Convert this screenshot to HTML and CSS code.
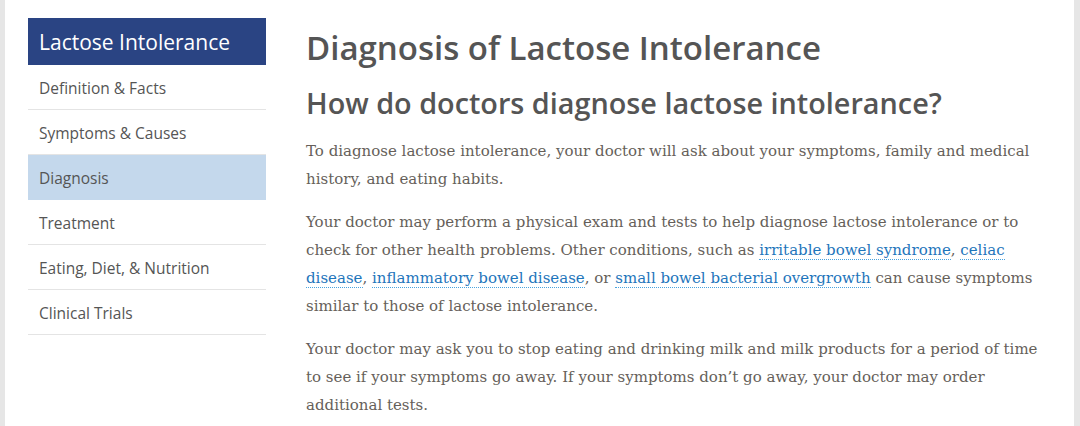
FILE: index.html
```html
<!DOCTYPE html>
<html lang="en">
<head>
    <meta charset="UTF-8">
    <meta name="viewport" content="width=device-width, initial-scale=1.0">
    <title>Diagnosis of Lactose Intolerance</title>
    <link rel="stylesheet" href="styles.css">
</head>
<body>
    <div class="page">
        <!-- Sidebar -->
        <nav class="sidebar">
            <div class="sidebar-title">Lactose Intolerance</div>
            <ul class="side-menu">
                <li><a href="#">Definition &amp; Facts</a></li>
                <li><a href="#">Symptoms &amp; Causes</a></li>
                <li class="active"><a href="#">Diagnosis</a></li>
                <li><a href="#">Treatment</a></li>
                <li><a href="#">Eating, Diet, &amp; Nutrition</a></li>
                <li><a href="#">Clinical Trials</a></li>
            </ul>
        </nav>

        <!-- Isi -->
        <main class="content">
            <h1>Diagnosis of Lactose Intolerance</h1>
            <h2>How do doctors diagnose lactose intolerance?</h2>
            <p>To diagnose lactose intolerance, your doctor will ask about your symptoms, family and medical history, and eating habits.</p>
            <p>Your doctor may perform a physical exam and tests to help diagnose lactose intolerance or to check for other health problems. Other conditions, such as <a href="#">irritable bowel syndrome</a>, <a href="#">celiac disease</a>, <a href="#">inflammatory bowel disease</a>, or <a href="#">small bowel bacterial overgrowth</a> can cause symptoms similar to those of lactose intolerance.</p>
            <p>Your doctor may ask you to stop eating and drinking milk and milk products for a period of time to see if your symptoms go away. If your symptoms don’t go away, your doctor may order additional tests.</p>
        </main>
    </div>
</body>
</html>
```

FILE: styles.css
```css
/* Halaman */
body { margin: 0; background-color: #e6e6e6; font-family: "Open Sans", Arial, sans-serif; }
.page {
    display: flex;
    align-items: flex-start;
    margin: 0 6px 0 5px;
    padding: 18px 0 0 23px;
    background-color: #fff;
    min-height: 100vh;
    box-sizing: border-box;
}

/* Sidebar */
.sidebar { width: 238px; flex-shrink: 0; }
.sidebar-title {
    background-color: #2a4483;
    color: #fff;
    font-size: 21px;
    height: 47px;
    line-height: 48px;
    padding-left: 11px;
}
.side-menu { list-style: none; margin: 0; padding: 0; }
.side-menu li { border-bottom: 1px solid #e4e4e4; }
.side-menu a {
    display: block;
    height: 43px;
    padding-top: 1px;
    line-height: 44px;
    padding-left: 11px;
    color: #555;
    font-size: 15.5px;
    text-decoration: none;
}
.side-menu li.active { background-color: #c4d8ec; border-bottom-color: #c4d8ec; }

/* Konten */
.content { width: 735px; margin-left: 40px; color: #555; }
.content h1 { font-size: 33px; font-weight: 600; margin: 10px 0 16px; line-height: 40px; }
.content h2 { font-size: 28.8px; font-weight: 600; margin: 0 0 15px; line-height: 38px; }
.content p {
    font-family: "DejaVu Serif", Georgia, serif;
    font-size: 15px;
    line-height: 28px;
    color: #665f5a;
    margin: 0 0 15px;
}
.content p:last-child { margin-bottom: 0; }
.content a { color: #1e75bb; text-decoration: none; border-bottom: 1px dotted #4aa3df; }
```
